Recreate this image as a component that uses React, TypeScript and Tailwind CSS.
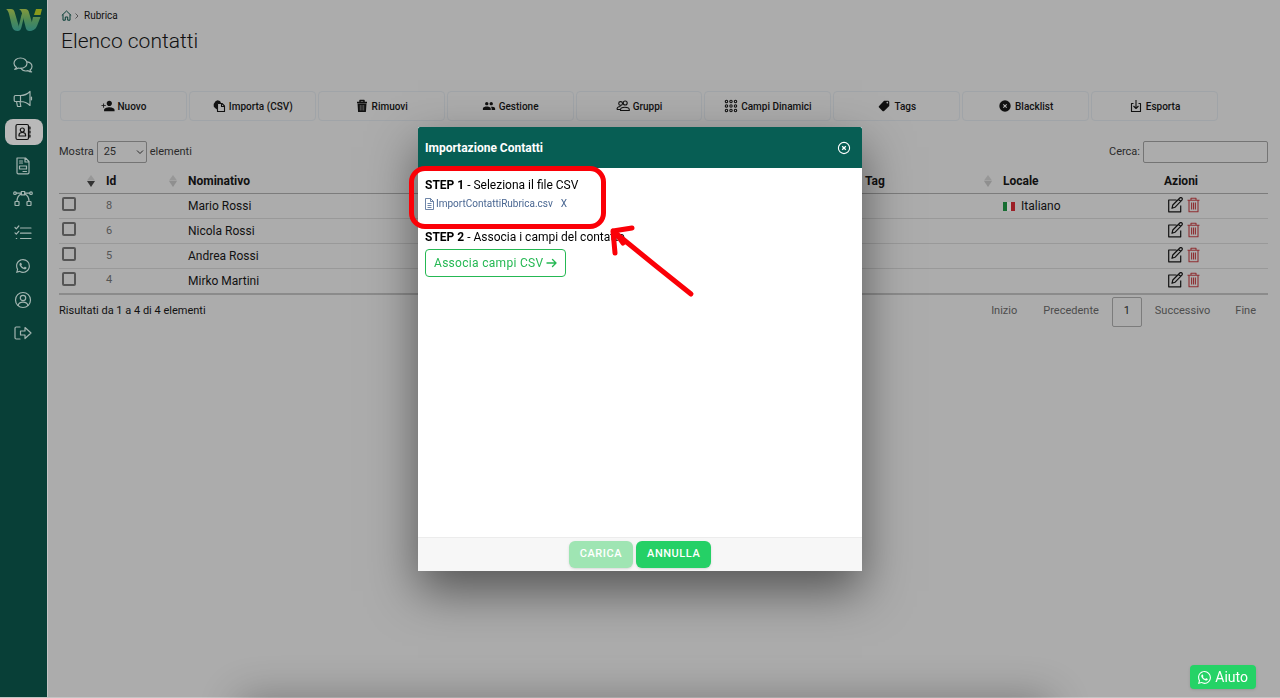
import React, { useState } from 'react';
import { BsWhatsapp } from 'react-icons/bs';
import { IoMdPeople, IoMdPersonAdd, IoMdPricetag } from 'react-icons/io';

type Contact = {
  id: number;
  name: string;
  locale?: string;
};

const CONTACTS: Contact[] = [
  { id: 8, name: 'Mario Rossi', locale: 'Italiano' },
  { id: 6, name: 'Nicola Rossi' },
  { id: 5, name: 'Andrea Rossi' },
  { id: 4, name: 'Mirko Martini' },
];

// Thin line icon on a 20x20 grid
const LineIcon: React.FC<{ children: React.ReactNode }> = ({ children }) => (
  <svg
    viewBox="0 0 20 20"
    className="size-5 shrink-0"
    fill="none"
    stroke="currentColor"
    strokeWidth="1.2"
    strokeLinecap="round"
    strokeLinejoin="round"
    aria-hidden="true"
  >
    {children}
  </svg>
);

// Small toolbar icon on a 14x14 grid
const SmallIcon: React.FC<{ children: React.ReactNode }> = ({ children }) => (
  <svg
    viewBox="0 0 14 14"
    className="size-3.5 shrink-0"
    fill="none"
    stroke="currentColor"
    strokeWidth="1.1"
    strokeLinejoin="round"
    aria-hidden="true"
  >
    {children}
  </svg>
);

const Logo = () => (
  <svg viewBox="0 0 36 24" className="h-6 w-9" aria-hidden="true">
    <defs>
      <linearGradient id="logo" x1="0" y1="0" x2="0" y2="24" gradientUnits="userSpaceOnUse">
        <stop offset="0" stopColor="#879a3a" />
        <stop offset="0.5" stopColor="#4f8a55" />
        <stop offset="1" stopColor="#2c8079" />
      </linearGradient>
    </defs>
    <path d="M0 1h5c2 0 3 1 3.600 3L13 19l-1 4c-3.500 0-5-1.500-6-4.500L3 6C2.300 3.500 1.500 2 0 1Z" fill="url(#logo)" />
    <path d="M11.500 23 15 9c1-4 2-6.500 4.500-6.500L15.500 19c-.6 2.500-1.500 4-4 4Z" fill="url(#logo)" />
    <path d="M13 1h6c2.500 0 3.500 1.500 4 3.500L27 18c-.5 3-1.500 5-3.500 5-2.300 0-3.300-1.500-3.800-3.500L16.500 7C15.800 4 15 2 13 1Z" fill="url(#logo)" />
    <path d="M27 9h7.500L31 18c-1.300 3.500-4 5-8 5 1.500-1.500 1.500-3 2-5Z" fill="url(#logo)" />
    <path d="M30 1h6l-1.500 6H28Z" fill="#8a9a1c" />
  </svg>
);

const ChatsIcon = () => (
  <LineIcon>
    <path d="M3.500 12.500C2 11.500 1 10 1 8.200 1 5.200 3.900 3 7.500 3S14 5.200 14 8.200s-2.900 5.100-6.500 5.100c-.8 0-1.500-.1-2.200-.3-1 .8-2.300 1.300-3.600 1.300.8-.5 1.500-1.100 1.800-1.800Z" />
    <path d="M14 6.800c2.900.4 5 2.300 5 4.700 0 1.500-.8 2.800-2 3.600.2.700.8 1.300 1.600 1.800-1.400 0-2.600-.4-3.500-1.200-3 .7-6-.3-7.100-2.400" />
  </LineIcon>
);

const MegaphoneIcon = () => (
  <LineIcon>
    <path d="M2.500 6.500h5v6h-5c-.8 0-1.300-.5-1.300-1.300V7.800c0-.8.500-1.300 1.300-1.300ZM7.500 6.500c4 0 7-1.500 9.500-4v14c-2.500-2.500-5.500-4-9.500-4M18.500 8.200v2.600M3.500 12.500l1 5h3.300l-.8-5" />
  </LineIcon>
);

const ContactsIcon = () => (
  <LineIcon>
    <rect x="3" y="2.500" width="12.500" height="15" rx="1.500" />
    <circle cx="9.300" cy="8" r="2" />
    <path d="M6 14v-1c0-1.600 1.200-2.500 3.300-2.500s3.300.9 3.300 2.500v1ZM15.500 5H17v2h-1.500M15.500 9H17v2h-1.500M15.500 13H17v2h-1.500" />
  </LineIcon>
);

const TemplateIcon = () => (
  <LineIcon>
    <path d="M4 2h8.500L16 5.500V16.500c0 .8-.5 1.300-1.300 1.300H5.300c-.8 0-1.300-.5-1.300-1.300ZM12 2v4h4M6.500 5h3M6.500 7h3M6.500 10h7v3h-7ZM10 15.500h3.500" />
  </LineIcon>
);

const FlowIcon = () => (
  <LineIcon>
    <rect x="8.300" y="2.500" width="3.400" height="3.400" />
    <rect x="2" y="12.500" width="4" height="4" rx="0.500" />
    <rect x="14" y="12.500" width="4" height="4" rx="0.500" />
    <circle cx="2" cy="4.200" r="1.300" />
    <circle cx="18" cy="4.200" r="1.300" />
    <path d="M3.300 4.200h5M11.700 4.200h5M4 12.500c0-4 1.500-6.500 4.500-7.500M16 12.500c0-4-1.500-6.500-4.500-7.500" />
  </LineIcon>
);

const ChecklistIcon = () => (
  <LineIcon>
    <path d="M7.500 5H18M7.500 10.200H18M7.500 15.500H18M2 4.500l1.300 1.300L5.800 3M2 9.800l1.300 1.300 2.500-2.800M3.300 15.500h.4" />
  </LineIcon>
);

const UserIcon = () => (
  <LineIcon>
    <circle cx="10" cy="10" r="7.500" />
    <circle cx="10" cy="8" r="2.700" />
    <path d="M5.200 15.500c.3-2.200 2-3.300 4.800-3.300s4.500 1.100 4.800 3.300" />
  </LineIcon>
);

const LogoutIcon = () => (
  <LineIcon>
    <path d="M7 4H3.200C2.500 4 2 4.500 2 5.200v9.600c0 .7.500 1.200 1.200 1.200H7M7.500 8H12V4.500l6 5.500-6 5.500V12H7.500Z" />
  </LineIcon>
);

const HandPageIcon = () => (
  <SmallIcon>
    <path d="M5.500 4.500H10l2.500 2.500v5.500h-7Z" />
    <path d="M9.500 4.500V7.500h3" />
    <path d="M1.700 5 3.500 2.200 5.500 1.200l2.500.8L9 4H5v6.500L3 9 1.700 7.500Z" fill="currentColor" stroke="none" />
  </SmallIcon>
);

const BinIcon = () => (
  <SmallIcon>
    <path d="M2 3.400h10M5 3V1.500h4V3" strokeWidth="1.500" />
    <path d="M2.500 4.500h9l-.6 8.500H3.100Z" fill="currentColor" stroke="none" />
    <path d="M5.300 6v5.500M7 6v5.500M8.700 6v5.500" stroke="#8a8a8a" strokeWidth="0.600" />
  </SmallIcon>
);

const GroupIcon = () => (
  <SmallIcon>
    <circle cx="4.600" cy="4.500" r="1.900" />
    <circle cx="9.200" cy="4" r="2" />
    <path d="M4.500 11.500v-.8c0-1.600 1.500-2.400 4.300-2.400s4.500.8 4.500 2.400v.8ZM1 10.500c0-2 1-3 3.500-3M1 10.500h3" />
  </SmallIcon>
);

const DotsIcon = () => (
  <SmallIcon>
    {[2.5, 7, 11.5].map(y =>
      [2.5, 7, 11.5].map(x => <circle key={`${x}-${y}`} cx={x} cy={y} r="1.200" />)
    )}
  </SmallIcon>
);

const BlockIcon = () => (
  <SmallIcon>
    <circle cx="7" cy="7" r="5.700" fill="currentColor" stroke="none" />
    <path d="m5.300 5.300 3.400 3.400M8.700 5.300 5.300 8.700" stroke="#b5b5b5" />
  </SmallIcon>
);

const ExportIcon = () => (
  <SmallIcon>
    <path d="M4.500 4.500h-2v8h9v-8h-2M7 1v8.500M4.500 7 7 9.500 9.500 7" />
  </SmallIcon>
);

const EditIcon = () => (
  <svg viewBox="0 0 17 16" className="h-4 w-[17px]" fill="none" stroke="currentColor" strokeWidth="1.200" strokeLinejoin="round" aria-hidden="true">
    <path d="M9.500 3H1.700v11.800h12V8.500M5 11.300l.8-3.300 7-7c.6-.6 1.500-.5 2.100 0s.6 1.500 0 2.100l-7 7.200ZM11.500 2.300l2.200 2.200" />
  </svg>
);

const TrashIcon = () => (
  <svg viewBox="0 0 13 16" className="h-4 w-[13px]" fill="none" stroke="currentColor" strokeWidth="1.100" strokeLinejoin="round" aria-hidden="true">
    <path d="M.5 3.200h12M4 3V1.200h5V3M2 3.200v11.600h9V3.200M4.600 5.500v7M6.500 5.500v7M8.400 5.500v7" />
  </svg>
);

const SIDEBAR = [
  { label: 'Chat', icon: <ChatsIcon /> },
  { label: 'Campagne', icon: <MegaphoneIcon /> },
  { label: 'Rubrica', icon: <ContactsIcon />, active: true },
  { label: 'Template', icon: <TemplateIcon /> },
  { label: 'Flussi', icon: <FlowIcon /> },
  { label: 'Attività', icon: <ChecklistIcon /> },
  { label: 'WhatsApp', icon: <BsWhatsapp className="size-3.5" /> },
  { label: 'Profilo', icon: <UserIcon /> },
  { label: 'Esci', icon: <LogoutIcon /> },
];

const TOOLBAR = [
  { label: 'Nuovo', icon: <IoMdPersonAdd className="size-3.5" /> },
  { label: 'Importa (CSV)', icon: <HandPageIcon /> },
  { label: 'Rimuovi', icon: <BinIcon /> },
  { label: 'Gestione', icon: <IoMdPeople className="size-3.5" /> },
  { label: 'Gruppi', icon: <GroupIcon /> },
  { label: 'Campi Dinamici', icon: <DotsIcon /> },
  { label: 'Tags', icon: <IoMdPricetag className="size-3.5" /> },
  { label: 'Blacklist', icon: <BlockIcon /> },
  { label: 'Esporta', icon: <ExportIcon /> },
];

const Sidebar = () => (
  <nav className="flex w-12 shrink-0 flex-col items-center border-r border-[#c4c4c4] bg-[#083f37] pt-2 text-[#a3b5b1]">
    <Logo />
    <div className="mt-5 flex h-[294px] w-full flex-col justify-between pr-1 pl-[5px]">
      {SIDEBAR.map(item => (
        <a
          key={item.label}
          href="#"
          aria-label={item.label}
          className={`flex h-[26px] items-center justify-center rounded-lg pr-0.5 ${item.active ? 'bg-[#b9b9b9] text-[#111111]' : ''}`}
        >
          {item.icon}
        </a>
      ))}
    </div>
  </nav>
);

const SortIcon: React.FC<{ down?: boolean }> = ({ down }) => (
  <svg viewBox="0 0 8 12" className="h-3 w-2" aria-hidden="true">
    <path d="M0 5.500 4 0l4 5.500Z" fill="#979797" />
    <path d="M0 6h8l-4 6Z" fill={down ? '#333333' : '#8f8f8f'} />
  </svg>
);

const HeaderCell: React.FC<{ label?: string; sort?: 'none' | 'down'; className?: string }> = ({ label, sort, className = '' }) => (
  <th className={`p-0 font-bold ${className}`}>
    <div className="flex h-[25px] items-center justify-between pr-[3px] pl-2">
      <span>{label}</span>
      {sort && <SortIcon down={sort === 'down'} />}
    </div>
  </th>
);

const ContactsTable = () => (
  <table className="w-full table-fixed border-collapse border-b-2 border-[#8b8b8b] text-left text-xs">
    <thead>
      <tr className="border-b border-[#7c7c7c]">
        <HeaderCell sort="down" className="w-[39px]" />
        <HeaderCell label="Id" sort="none" className="w-[82px]" />
        <HeaderCell label="Nominativo" />
        <HeaderCell label="Tag" sort="none" className="w-[138px]" />
        <HeaderCell label="Locale" className="w-[99px]" />
        <th className="w-[174px] p-0 text-center font-bold">Azioni</th>
      </tr>
    </thead>
    <tbody>
      {CONTACTS.map(contact => (
        <tr key={contact.id} className="h-[25px] border-b border-[#999999]">
          <td className="p-0 pl-[3px]">
            <input
              type="checkbox"
              aria-label={`Seleziona ${contact.name}`}
              className="mb-1 block size-3.5 appearance-none rounded-xs border-2 border-[#555555]"
            />
          </td>
          <td className="p-0 pl-2 text-[11px] text-[#555555]">{contact.id}</td>
          <td className="p-0 pl-2">{contact.name}</td>
          <td className="p-0" />
          <td className="p-0 pl-2">
            {contact.locale && (
              <span className="flex items-center gap-1.5">
                <svg viewBox="0 0 12 9" className="h-[9px] w-3" aria-hidden="true">
                  <path d="M0 0h4v9H0Z" fill="#176d32" />
                  <path d="M4 0h4v9H4Z" fill="#bcbcbc" />
                  <path d="M8 0h4v9H8Z" fill="#9c1f27" />
                </svg>
                {contact.locale}
              </span>
            )}
          </td>
          <td className="p-0">
            <div className="flex items-center justify-center gap-[3px] pb-0.5 pl-1">
              <button aria-label={`Modifica ${contact.name}`}><EditIcon /></button>
              <button aria-label={`Elimina ${contact.name}`} className="text-[#8f2f32]"><TrashIcon /></button>
            </div>
          </td>
        </tr>
      ))}
    </tbody>
  </table>
);

const Pagination = () => (
  <div className="flex items-center text-[11px] text-[#4c4c4c]">
    <button className="px-[13px]">Inizio</button>
    <button className="px-[13px]">Precedente</button>
    <button className="h-[30px] w-[30px] rounded-xs border border-[#7c7c7c] text-[#222222]">1</button>
    <button className="px-[13px]">Successivo</button>
    <button className="px-3">Fine</button>
  </div>
);

// Hand-drawn marks on top of the first step
const Highlight = () => (
  <>
    <div className="pointer-events-none absolute top-[39px] -left-[9px] h-[63px] w-[197px] rounded-2xl border-[5px] border-[#fb0007]" />
    <svg
      viewBox="0 0 90 76"
      className="pointer-events-none absolute top-24 left-[188px] h-[76px] w-[90px]"
      fill="none"
      stroke="#fb0007"
      strokeWidth="5"
      strokeLinecap="round"
      strokeLinejoin="round"
      aria-hidden="true"
    >
      <path d="M85 71 50 43 7 8M26 5 7 8l2 22M9 9l8 11" />
    </svg>
  </>
);

const ImportDialog: React.FC<{ onClose: () => void }> = ({ onClose }) => {
  const [file, setFile] = useState<string | null>('ImportContattiRubrica.csv');

  return (
    <div className="fixed inset-0 flex items-center justify-center">
      <div
        role="dialog"
        aria-labelledby="import-title"
        className="relative flex h-[444px] w-[444px] flex-col bg-white shadow-[0_20px_45px_rgba(0,0,0,0.5)]"
      >
        <div className="flex h-[41px] shrink-0 items-center justify-between rounded-t-xs bg-[#075e54] pr-[11px] pl-[7px] text-white">
          <h2 id="import-title" className="text-xs font-bold">Importazione Contatti</h2>
          <button onClick={onClose} aria-label="Chiudi">
            <svg viewBox="0 0 14 14" className="size-3.5" fill="none" stroke="currentColor" strokeWidth="1.100" aria-hidden="true">
              <circle cx="7" cy="7" r="5.600" />
              <path d="m5.200 5.200 3.600 3.600M8.800 5.200 5.200 8.800" strokeWidth="1.300" />
            </svg>
          </button>
        </div>

        <div className="flex-1 px-[7px] pt-2 text-xs text-black">
          <p className="leading-[18px]"><b>STEP 1</b> - Seleziona il file CSV</p>
          <div className="flex h-5 items-center text-[10px] text-[#4a6792]">
            {file && (
              <>
                <svg viewBox="0 0 9 12" className="h-3 w-[9px]" fill="none" stroke="currentColor" aria-hidden="true">
                  <path d="M.5.500h5l3 3v8h-8ZM5.500.500v3h3M2.500 5.500h4M2.500 7.500h4M2.500 9.500h4" strokeWidth="0.800" />
                </svg>
                <a href="#" className="ml-0.5">{file}</a>
                <button onClick={() => setFile(null)} className="ml-2">X</button>
              </>
            )}
          </div>
          <p className="mt-3.5 leading-[18px]"><b>STEP 2</b> - Associa i campi del contatto</p>
          <button className="mt-[3px] flex h-7 items-center gap-[3px] rounded-sm border border-[#25b853] px-2 tracking-wide text-[#25b853]">
            Associa campi CSV
            <svg viewBox="0 0 11 10" className="h-2.5 w-[11px]" fill="none" stroke="currentColor" strokeWidth="1.400" strokeLinecap="round" strokeLinejoin="round" aria-hidden="true">
              <path d="M1 5h9M6.500 1.500 10 5 6.500 8.500" />
            </svg>
          </button>
        </div>

        <div className="flex h-[34px] shrink-0 items-center justify-center gap-[3px] border-t border-[#ececec] bg-[#f7f7f7] text-[11px] font-medium tracking-wider text-white">
          <button disabled className="h-[27px] rounded-md bg-[#9fe5b3] px-[11px] shadow-sm">CARICA</button>
          <button onClick={onClose} className="h-[27px] rounded-md bg-[#25d066] px-[11px] shadow-sm">ANNULLA</button>
        </div>

        <Highlight />
      </div>
    </div>
  );
};

const App: React.FC = () => {
  const [dialogOpen, setDialogOpen] = useState(true);

  return (
    <div className="flex min-h-screen border-b border-[#c4c4c4] bg-[#acacac] font-[Roboto,sans-serif] text-[#111111]">
      <Sidebar />

      <main className="min-w-0 flex-1 pr-3 pl-[11px]">
        <nav className="flex items-center gap-[3px] pt-2 pl-0.5 text-[10px] leading-[15px]">
          <a href="#" aria-label="Home" className="text-[#083f37]">
            <svg viewBox="0 0 11 11" className="size-[11px]" fill="none" stroke="currentColor" strokeLinejoin="round" aria-hidden="true">
              <path d="M.8 5.500 5.500 1l4.700 4.500M2 4.500v5.700h2.300V7h2.400v3.200H9V4.500" />
            </svg>
          </a>
          <svg viewBox="0 0 4 6" className="h-1.5 w-1" fill="none" stroke="#555555" aria-hidden="true">
            <path d="m.5.500 2.500 2.500L.5 5.500" />
          </svg>
          <a href="#" className="ml-0.5">Rubrica</a>
        </nav>
        <h1 className="pl-0.5 text-[21px] leading-9 font-light">Elenco contatti</h1>

        <div className="mt-8 mr-[50px] ml-px grid grid-cols-9 gap-0.5">
          {TOOLBAR.map(item => (
            <button
              key={item.label}
              onClick={() => item.label === 'Importa (CSV)' && setDialogOpen(true)}
              className="flex h-[30px] items-center justify-center gap-[3px] rounded-sm border border-[#a0a4a8] text-[10px] font-medium"
            >
              {item.icon}
              {item.label}
            </button>
          ))}
        </div>

        <div className="mt-5 flex items-center justify-between text-[11px] text-[#2a2a2a]">
          <div className="flex items-center gap-[3px]">
            <label htmlFor="page-size">Mostra</label>
            <span className="relative flex items-center">
              <select id="page-size" className="h-[22px] w-[50px] appearance-none rounded-xs border border-[#747474] pl-1.5">
                <option>25</option>
                <option>50</option>
              </select>
              <svg viewBox="0 0 8 5" className="pointer-events-none absolute right-[3px] h-[5px] w-2" fill="none" stroke="currentColor" aria-hidden="true">
                <path d="m1 .500 3 3 3-3" />
              </svg>
            </span>
            <label htmlFor="page-size">elementi</label>
          </div>
          <div className="flex items-center gap-[3px]">
            <label htmlFor="search">Cerca:</label>
            <input id="search" className="h-[22px] w-[125px] rounded-xs border border-[#747474]" />
          </div>
        </div>

        <div className="mt-[5px]">
          <ContactsTable />
        </div>

        <div className="mt-0.5 flex items-center justify-between text-[11px]">
          <p>Risultati da 1 a 4 di 4 elementi</p>
          <Pagination />
        </div>
      </main>

      {/* Soft shade rising from the bottom edge */}
      <div className="pointer-events-none fixed right-[230px] -bottom-10 left-[240px] h-10 shadow-[0_0_40px_rgba(0,0,0,0.3)]" />

      <button className="fixed right-6 bottom-[9px] flex h-6 items-center gap-1 rounded-sm bg-[#25d366] px-2 text-sm text-white shadow-sm">
        <BsWhatsapp className="size-[13px]" />
        Aiuto
      </button>

      {dialogOpen && <ImportDialog onClose={() => setDialogOpen(false)} />}
    </div>
  );
};

export default App;
